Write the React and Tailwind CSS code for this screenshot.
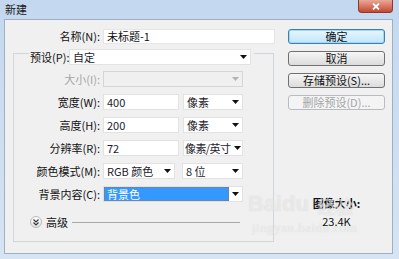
import React from 'react';

const font = "font-['Noto_Sans_CJK_SC','Noto_Sans',sans-serif]";

function Arrow({ disabled }) {
  return (
    <svg width="7" height="4" viewBox="0 0 7 4" className="shrink-0">
      <path d="M0 0 H7 L3.5 4 Z" fill={disabled ? '#b4b4b4' : '#111'} />
    </svg>
  );
}

function Select({ value, width, disabled, selected, tight }) {
  return (
    <div
      className={`h-[16px] flex items-center border whitespace-nowrap ${disabled ? 'bg-[#f0f0f0] border-[#d6d6d6]' : 'bg-white border-[#e2e2e2]'}`}
      style={{ width }}
    >
      {selected ? (
        <div className="flex-1 h-full bg-[#3399ff] border border-dotted border-[#a0744a] text-white pl-[2px] leading-[12px]">
          {value}
        </div>
      ) : (
        <div className={`flex-1 leading-[14px] text-[#1c1c2c] ${tight ? 'pl-[1px] tracking-[-0.6px]' : 'pl-[3px]'}`}>{value}</div>
      )}
      <div className={`${tight ? 'w-[10px]' : 'w-[13px]'} flex justify-center shrink-0`}>
        <Arrow disabled={disabled} />
      </div>
    </div>
  );
}

function Input({ value, width }) {
  return (
    <div
      className="h-[16px] bg-white border border-[#e2e2e2] pl-[3px] leading-[14px] text-[#1c1c2c]"
      style={{ width }}
    >
      {value}
    </div>
  );
}

function Row({ label, disabled, children }) {
  return (
    <div className="flex items-center h-[16px] whitespace-nowrap">
      <div className={`w-[86px] text-right ${disabled ? 'text-[#a6a6a6]' : 'text-[#111]'}`}>{label}</div>
      <div className="ml-[3px] flex gap-[4px]">{children}</div>
    </div>
  );
}

function Btn({ children, focused, disabled }) {
  let cls = 'border-[#707070] bg-linear-to-b from-[#f6f6f6] to-[#dcdcdc] text-[#111]';
  if (focused) cls = 'border-[#3c7fb1] bg-linear-to-b from-[#eaf6fd] to-[#bee6fd] text-[#111] shadow-[inset_0_0_0_1px_#9fd7f5]';
  if (disabled) cls = 'border-[#b8bcc0] bg-[#f4f4f4] text-[#a6a6a6]';
  return (
    <div className={`h-[15px] w-[97px] rounded-[3px] border flex items-center justify-center leading-none whitespace-nowrap ${cls}`}>
      {children}
    </div>
  );
}

export default function App() {
  return (
    <div className={`w-[399px] h-[259px] flex flex-col text-[11px] bg-linear-to-b from-[#c3d8ef] to-[#d6e4f3] ${font}`}>
      {/* title bar */}
      <div className="h-[19px] flex justify-between items-start">
        <span className="pl-[5px] leading-[19px] text-[#1a1a1a]">新建</span>
        <div className="mr-[6px] w-[35px] h-[13px] rounded-b-[4px] border border-t-0 border-[#8a3b2c] bg-linear-to-b from-[#e8a898] to-[#c5452c] flex items-center justify-center">
          <svg width="8" height="7" viewBox="0 0 8 7">
            <path d="M1 0.5 L7 6.5 M7 0.5 L1 6.5" stroke="#fff" strokeWidth="1.8" />
          </svg>
        </div>
      </div>

      {/* client area */}
      <div className="relative ml-[4px] mr-[6px] h-[235px] bg-[#f0f0f0] border border-[#9fb0c4] flex">
        <div className="w-[283px] pl-[8px] pt-[9px]">
          <div className="flex items-center h-[15px] whitespace-nowrap">
            <div className="w-[87px] text-right text-[#111]">名称(N):</div>
            <div className="ml-[3px] h-[15px] w-[172px] bg-white border border-[#e6e6e6] pl-[3px] leading-[13px] text-[#111]">
              未标题-1
            </div>
          </div>

          <div className="mt-[9px] w-[261px] h-[189px] border border-[#cfd6dc] flex flex-col">
            <div className="-mt-[5px] ml-[15px] w-[225px] bg-[#f0f0f0] flex items-center h-[16px] pl-[1px] whitespace-nowrap">
              <span className="w-[38px] text-[#111]">预设(P):</span>
              <div className="ml-[1px]">
                <Select value="自定" width={182} />
              </div>
            </div>

            <div className="mt-[6px] flex flex-col gap-[7px]">
              <Row label="大小(I):" disabled>
                <Select value="" width={140} disabled />
              </Row>
              <Row label="宽度(W):">
                <Input value="400" width={76} />
                <Select value="像素" width={60} />
              </Row>
              <Row label="高度(H):">
                <Input value="200" width={76} />
                <Select value="像素" width={60} />
              </Row>
              <Row label="分辨率(R):">
                <Input value="72" width={76} />
                <Select value="像素/英寸" width={60} tight />
              </Row>
              <Row label="颜色模式(M):">
                <Select value="RGB 颜色" width={72} />
                <div className="ml-[3px]">
                  <Select value="8 位" width={61} />
                </div>
              </Row>
              <Row label="背景内容(C):">
                <Select value="背景色" width={140} selected />
              </Row>
            </div>

            <div className="mt-[14px] flex items-center h-[12px] pl-[16px] whitespace-nowrap">
              <div className="w-[12px] h-[12px] rounded-full border border-[#b8b8b8] bg-linear-to-b from-white to-[#e4e4e4] flex items-center justify-center">
                <svg width="6" height="7" viewBox="0 0 6 7">
                  <path d="M0.5 0.5 L3 3 L5.5 0.5 M0.5 3.5 L3 6 L5.5 3.5" stroke="#333" strokeWidth="1.1" fill="none" />
                </svg>
              </div>
              <span className="ml-[4px] text-[#111]">高级</span>
              <div className="ml-[4px] w-[168px] h-px bg-[#a8a8a8]" />
            </div>
          </div>
        </div>

        <div className="w-[97px] pt-[9px] flex flex-col">
          <div className="flex flex-col gap-[7px]">
            <Btn focused>确定</Btn>
            <Btn>取消</Btn>
            <Btn>存储预设(S)...</Btn>
            <Btn disabled>删除预设(D)...</Btn>
          </div>
          <div className="mt-[86px] flex flex-col items-center text-[#111]">
            <span className="font-bold leading-[14px]">图像大小:</span>
            <span className="mt-[4px] leading-[14px]">23.4K</span>
          </div>
        </div>

        {/* baidu watermark */}
        <div className="absolute left-[243px] top-[173px] flex flex-col items-start text-white/50 [text-shadow:0_0_1px_rgba(150,150,150,0.35)] pointer-events-none whitespace-nowrap">
          <div className="flex items-end font-['Liberation_Sans',sans-serif] text-[22px] font-bold leading-none">
            <span>Bai</span>
            <span>du</span>
            <span className={`ml-[8px] text-[18px] ${font}`}>经验</span>
          </div>
          <div className="mt-[6px] ml-[4px] font-['Liberation_Serif',serif] text-[13px] leading-none tracking-[0.5px]">
            jingyan.baidu.com
          </div>
        </div>
      </div>
    </div>
  );
}
